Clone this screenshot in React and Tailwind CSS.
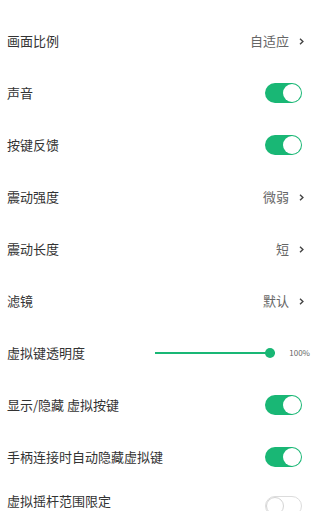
const FONT = { fontFamily: '"Noto Sans CJK SC", "Noto Sans", sans-serif' };

function Toggle({ on }) {
  return on ? (
    <div className="w-[37px] h-[20px] rounded-full bg-[#19b775] flex items-center justify-end p-[1px]">
      <div className="w-[18px] h-[18px] rounded-full bg-white" />
    </div>
  ) : (
    <div className="w-[37px] h-[20px] rounded-full bg-white border border-[#dcdcdc] flex items-center justify-start">
      <div className="w-[18px] h-[18px] rounded-full bg-white border border-[#d4d4d4]" />
    </div>
  );
}

function Chevron() {
  return (
    <svg width="5" height="7" viewBox="0 0 5 7" className="ml-[10px]">
      <path d="M1 0.8 L3.9 3.5 L1 6.2" fill="none" stroke="#444" strokeWidth="1.4" />
    </svg>
  );
}

const ROWS = [
  { label: '画面比例', value: '自适应' },
  { label: '声音', toggle: true },
  { label: '按键反馈', toggle: true },
  { label: '震动强度', value: '微弱' },
  { label: '震动长度', value: '短' },
  { label: '滤镜', value: '默认' },
  { label: '虚拟键透明度', slider: 100 },
  { label: '显示/隐藏 虚拟按键', toggle: true },
  { label: '手柄连接时自动隐藏虚拟键', toggle: true },
];

export default function App() {
  return (
    <div className="w-[320px] h-[511px] bg-white overflow-hidden pt-[15px]" style={FONT}>
      {ROWS.map(r => (
        <div key={r.label} className="h-[52px] flex items-center pl-[7px] pr-[18px]">
          <span className="text-[13px] text-[#333]">{r.label}</span>
          <div className="flex-1" />
          {r.value && (
            <div className="flex items-center mr-[-2px]">
              <span className="text-[13px] text-[#666]">{r.value}</span>
              <Chevron />
            </div>
          )}
          {r.toggle && <Toggle on />}
          {r.slider != null && (
            <div className="flex items-center mr-[-8px]">
              <div className="relative w-[120px] h-[10px] flex items-center">
                <div className="h-[2px] w-full bg-[#19b775]" />
                <div className="absolute right-0 w-[10px] h-[10px] rounded-full bg-[#19b775]" />
              </div>
              <span className="ml-[14px] text-[8px] text-[#666]">100%</span>
            </div>
          )}
        </div>
      ))}
      <div className="flex items-start pl-[7px] pr-[18px] pt-[9px]">
        <span className="text-[13px] text-[#333] leading-[18px]">虚拟摇杆范围限定</span>
        <div className="flex-1" />
        <div className="pt-[4px]">
          <Toggle on={false} />
        </div>
      </div>
    </div>
  );
}
